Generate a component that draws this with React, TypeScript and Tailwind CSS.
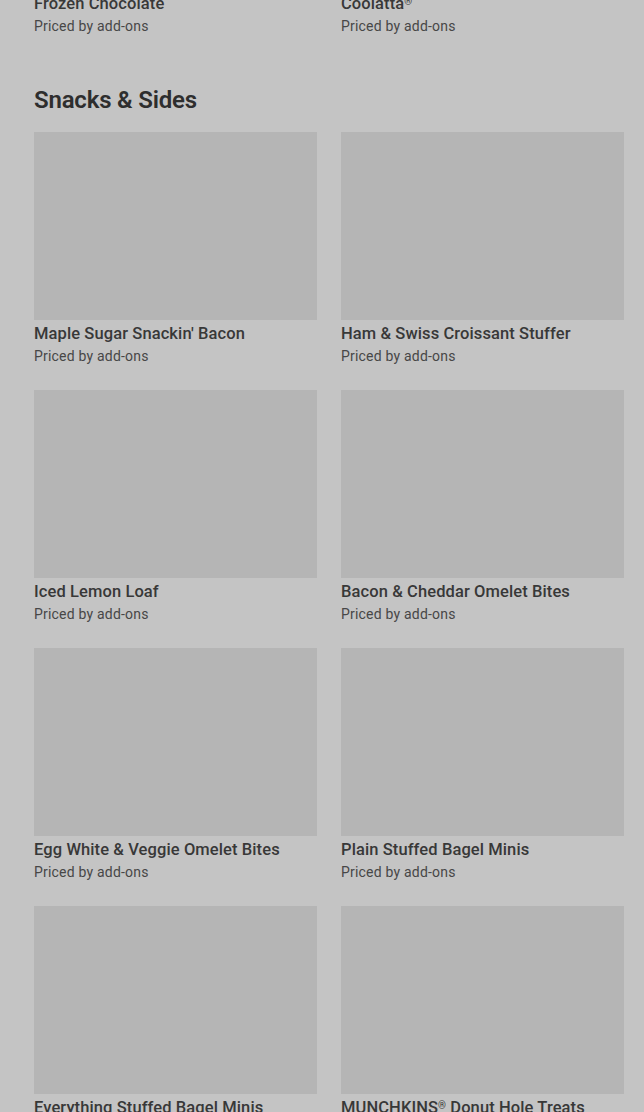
import React from "react";

// Items shown in the "Snacks & Sides" grid
const snacks = [
  "Maple Sugar Snackin' Bacon",
  "Ham & Swiss Croissant Stuffer",
  "Iced Lemon Loaf",
  "Bacon & Cheddar Omelet Bites",
  "Egg White & Veggie Omelet Bites",
  "Plain Stuffed Bagel Minis",
  "Everything Stuffed Bagel Minis",
  "MUNCHKINS® Donut Hole Treats",
];

// Render the ® mark small and raised, as on the menu
const withMark = (text: string) =>
  text.split("®").map((part, i, arr) => (
    <React.Fragment key={i}>
      {part}
      {i < arr.length - 1 && (
        <span className="relative -top-[4px] text-[10px] leading-none">®</span>
      )}
    </React.Fragment>
  ));

const MenuCard = ({ name }: { name: string }) => (
  <div className="flex flex-col">
    <div className="h-[188px] bg-[#b5b5b5]" />
    <p className="mt-[4px] h-5 text-[16.5px] leading-5 font-medium text-[#383838] tracking-[0.1px]">
      {withMark(name)}
    </p>
    <p className="mt-[2px] text-sm leading-5 text-[#474747] tracking-[0.2px]">Priced by add-ons</p>
  </div>
);

export default function App() {
  return (
    <div
      className="h-[1112px] overflow-hidden bg-[#c4c4c4] pl-[34px] pr-[20px]"
      style={{ fontFamily: "Roboto, 'Noto Sans', sans-serif" }}
    >
      {/* tail of the previous section */}
      <div className="grid grid-cols-2 gap-x-6 -mt-[6px]">
        <div>
          <p className="h-5 text-[16.5px] leading-5 font-medium text-[#383838] tracking-[0.1px]">Frozen Chocolate</p>
          <p className="mt-[2px] text-sm leading-5 text-[#474747] tracking-[0.2px]">Priced by add-ons</p>
        </div>
        <div>
          <p className="h-5 text-[16.5px] leading-5 font-medium text-[#383838] tracking-[0.1px]">
            {withMark("Coolatta®")}
          </p>
          <p className="mt-[2px] text-sm leading-5 text-[#474747] tracking-[0.2px]">Priced by add-ons</p>
        </div>
      </div>

      <h2 className="mt-[50px] mb-[18px] text-[24px] leading-7 font-semibold text-[#2e2e2e] tracking-[-0.2px]">
        Snacks &amp; Sides
      </h2>

      <div className="grid grid-cols-2 gap-x-6 gap-y-6">
        {snacks.map((name) => (
          <MenuCard key={name} name={name} />
        ))}
      </div>
    </div>
  );
}
